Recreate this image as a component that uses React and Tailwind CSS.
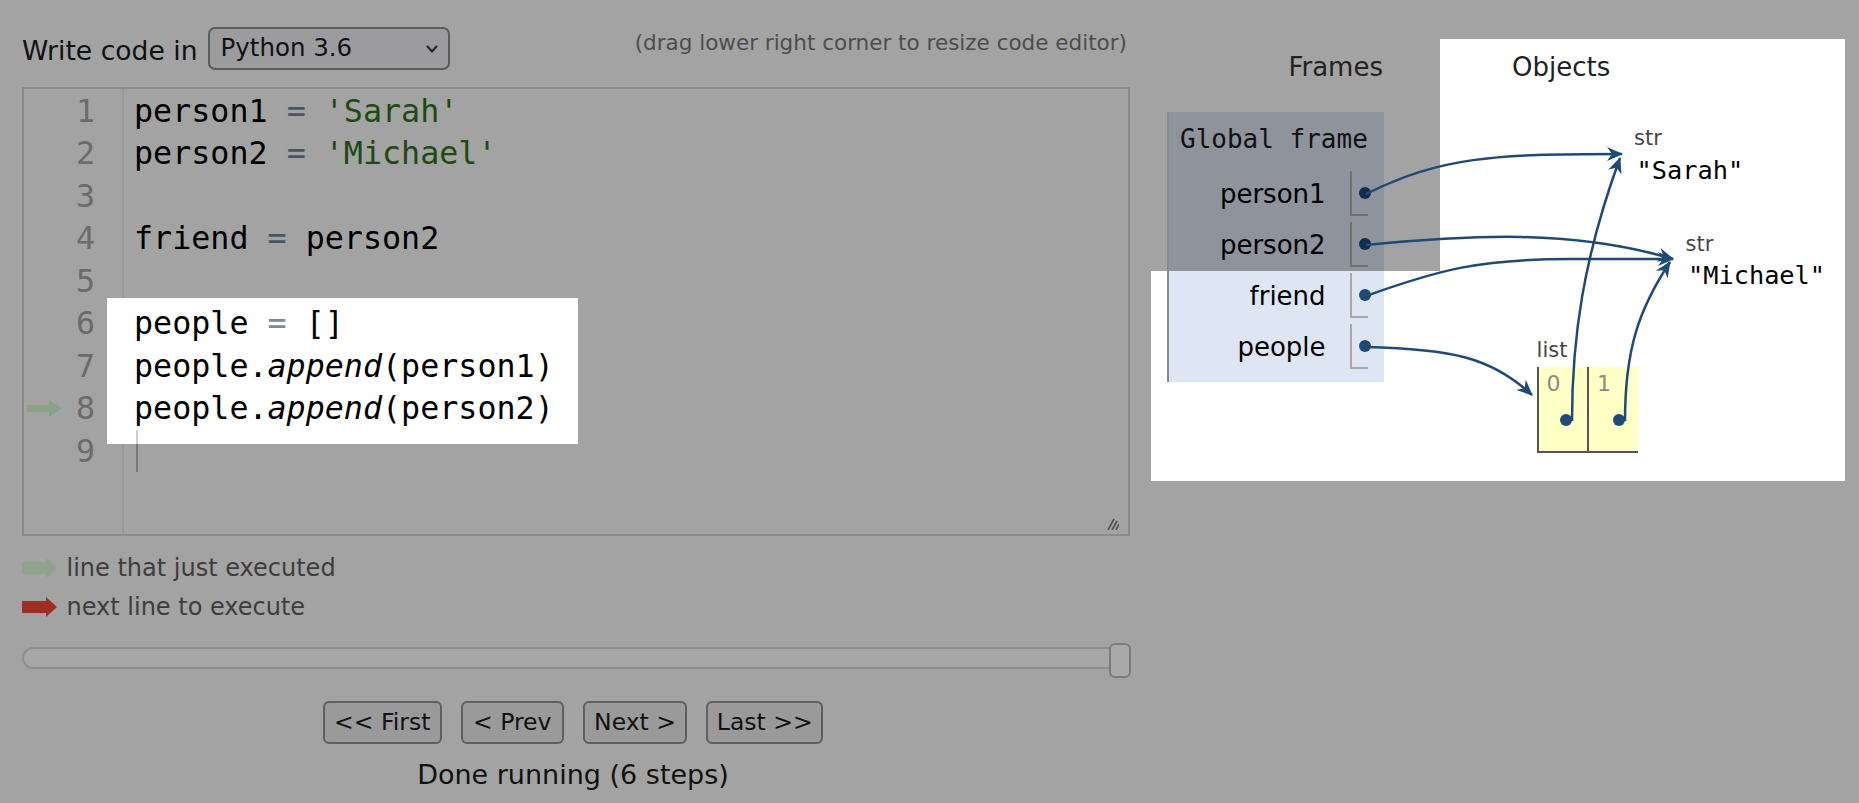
import React from 'react';

const SANS = "font-['DejaVu_Sans',Verdana,sans-serif]";
const MONO = "font-['DejaVu_Sans_Mono',monospace]";

const Arrow = ({ color, w = 35, h = 20, body = 24, thick = 12 }) => (
  <svg width={w} height={h} viewBox={`0 0 ${w} ${h}`} className="block shrink-0">
    <rect x="0" y={(h - thick) / 2} width={body} height={thick} fill={color} />
    <polygon points={`${body},0 ${w},${h / 2} ${body},${h}`} fill={color} />
  </svg>
);

const Eq = ({ light }) => (
  <span className={light ? 'text-[#7d8b9d]' : 'text-[#4a5562]'}>=</span>
);

const Str = ({ children }) => <span className="text-[#1c4a12]">{children}</span>;

const frameRows = [
  { name: 'person1', dim: true },
  { name: 'person2', dim: true },
  { name: 'friend', dim: false },
  { name: 'people', dim: false },
];

const NavButton = ({ label, width }) => (
  <button
    className={`h-[43px] rounded-[6px] border-2 border-[#5f5f62] bg-[#9a9a9b] text-[23.5px] text-[#111] ${width}`}
  >
    {label}
  </button>
);

export default function App() {
  const lineNums = [1, 2, 3, 4, 5, 6, 7, 8, 9];

  return (
    <div className={`w-[1859px] h-[803px] bg-[#a3a3a3] flex overflow-hidden leading-[normal] ${SANS}`}>
      {/* left column: editor + controls */}
      <div className="ml-[22px] w-[1108px] flex flex-col">
        <div className="flex items-center h-[43px] mt-[27px]">
          <span className="text-[26.6px] leading-[30px] text-[#111] mr-[10px] mt-[4px]">Write code in</span>
          <div className="w-[242px] h-[43px] border-2 border-[#5a5a5f] rounded-[7px] bg-[#9c9c9e] flex items-center pl-[11px] pr-[10px]">
            <span className="text-[24.5px] text-[#111] leading-none">Python 3.6</span>
            <svg width="12" height="8" viewBox="0 0 12 8" className="ml-auto">
              <polyline points="1,1 6,6.5 11,1" fill="none" stroke="#222" strokeWidth="2" />
            </svg>
          </div>
          <span className="ml-auto self-start mt-[3px] mr-[3px] text-[21.5px] text-[#4d4d4d]">
            (drag lower right corner to resize code editor)
          </span>
        </div>

        {/* code editor */}
        <div className={`relative mt-[17px] h-[449px] border-2 border-[#8c8c8c] flex ${MONO} text-[31.7px] leading-[42.5px]`}>
          <div className="w-[100px] border-r-2 border-[#999999] pt-[0.5px] pr-[27px] text-[#6b6b6b]">
            {lineNums.map((n) => (
              <div key={n} className="h-[42.5px] flex items-center">
                {n === 8 && (
                  <div className="pl-[3px]">
                    <Arrow color="#8ba186" w={35} h={17} body={22} thick={7} />
                  </div>
                )}
                <span className="ml-auto">{n}</span>
              </div>
            ))}
          </div>
          <div className="flex-1 pt-[0.5px] text-black whitespace-pre">
            <div className="pl-[10px] h-[42.5px]">person1 <Eq /> <Str>'Sarah'</Str></div>
            <div className="pl-[10px] h-[42.5px]">person2 <Eq /> <Str>'Michael'</Str></div>
            <div className="pl-[10px] h-[42.5px]"></div>
            <div className="pl-[10px] h-[42.5px]">friend <Eq /> person2</div>
            <div className="pl-[10px] h-[42.5px]"></div>
            <div className="bg-white w-[471px] -ml-[17.5px] -mt-[4px] pt-[4px] pb-[14.5px] -mb-[14.5px]">
              <div className="pl-[27.5px] h-[42.5px]">people <Eq light /> []</div>
              <div className="pl-[27.5px] h-[42.5px]">people.<span className="italic">append</span>(person1)</div>
              <div className="pl-[27.5px] h-[42.5px]">people.<span className="italic">append</span>(person2)</div>
            </div>
            <div className="pl-[11.5px] h-[42.5px]">
              <div className="w-[2px] h-[14.5px] bg-[#cfcfcf]" />
              <div className="w-[2px] h-[28px] bg-[#7a7a7a]" />
            </div>
          </div>
          <svg width="14" height="12" viewBox="0 0 14 12" className="absolute right-[9px] bottom-[4px]">
            <line x1="3" y1="12" x2="9" y2="1" stroke="#4f4f4f" strokeWidth="1.6" />
            <line x1="7" y1="12" x2="12" y2="3" stroke="#4f4f4f" strokeWidth="1.6" />
            <line x1="11" y1="12" x2="14" y2="6" stroke="#4f4f4f" strokeWidth="1.6" />
          </svg>
        </div>

        {/* legend */}
        <div className="mt-[18px] flex items-center h-[28px] text-[24px] text-[#3d3d3d]">
          <Arrow color="#8ea58b" />
          <span className="ml-[9.5px]">line that just executed</span>
        </div>
        <div className="mt-[11px] flex items-center h-[28px] text-[24px] text-[#3d3d3d]">
          <Arrow color="#9c2f22" />
          <span className="ml-[9.5px]">next line to execute</span>
        </div>

        {/* slider */}
        <div className="relative mt-[22px] h-[35px]">
          <div className="mt-[4px] h-[22px] w-[1109px] rounded-full border-2 border-[#8e8e8e] bg-[#a7a7a7]" />
          <div className="absolute left-[1087px] top-0 w-[22px] h-[35px] rounded-[6px] border-2 border-[#7b7b7b] bg-[#a9a9a9]" />
        </div>

        {/* nav buttons */}
        <div className="mt-[22.7px] flex justify-center gap-[19px] pr-[6px]">
          <NavButton label="<< First" width="w-[119px]" />
          <NavButton label="< Prev" width="w-[103px]" />
          <NavButton label="Next >" width="w-[104.5px]" />
          <NavButton label="Last >>" width="w-[117px]" />
        </div>
        <div className="mt-[15px] text-center text-[27px] text-[#111] pr-[6px]">Done running (6 steps)</div>
      </div>

      {/* right: frames and objects visualization */}
      <div className="relative ml-[21px] mt-[39px] w-[694px] h-[442px] bg-white">
        <div className="absolute left-0 top-0 w-[289px] h-[232px] bg-[#a3a3a3]" />
        <div className="absolute left-[361px] top-[13px] text-[26px] leading-[30px] text-[#222]">Objects</div>

        <div className="relative w-[232px] flex flex-col">
          <div className="mt-[13px] text-right text-[26px] leading-[30px] text-[#222]">Frames</div>
          <div className="mt-[30px] ml-[15.6px] w-[217px] border-l-2 border-[#8a8a8a] pb-[13px] bg-[linear-gradient(to_bottom,#8e939c_158.7px,#dfe6f3_158.7px)]">
            <div className={`pt-[12px] pl-[11.4px] text-[26px] leading-[30px] text-[#111] ${MONO}`}>Global frame</div>
            <div className="mt-[17.4px] flex flex-col gap-[6px]">
              {frameRows.map((r) => (
                <div key={r.name} className="flex items-center h-[45px]">
                  <span className="w-[157px] text-right text-[26px] leading-[30px] text-black">{r.name}</span>
                  <div
                    className={`relative ml-[24.3px] w-[18px] h-[45px] border-l-2 border-b-2 ${
                      r.dim ? 'border-[#707070]' : 'border-[#a9a9a9]'
                    }`}
                  >
                    <div
                      className={`absolute left-[7.6px] top-[15.5px] w-[12px] h-[12px] rounded-full ${
                        r.dim ? 'bg-[#0f2e4d]' : 'bg-[#1d4a77]'
                      }`}
                    />
                  </div>
                </div>
              ))}
            </div>
          </div>
        </div>

        {/* heap objects */}
        <div className="absolute left-[483px] top-[87px]">
          <div className="text-[21px] text-[#444]">str</div>
          <div className={`mt-[6px] ml-[2.6px] text-[25.3px] text-black ${MONO}`}>"Sarah"</div>
        </div>
        <div className="absolute left-[534.6px] top-[193.2px]">
          <div className="text-[21px] text-[#444]">str</div>
          <div className={`mt-[5px] ml-[2.4px] text-[25.3px] text-black ${MONO}`}>"Michael"</div>
        </div>
        <div className="absolute left-[385.6px] top-[298.8px]">
          <div className="text-[21px] text-[#444]">list</div>
          <div className="mt-[5px] flex">
            <div className="relative w-[50.5px] h-[86.7px] border-l-2 border-b-2 border-[#555] bg-[#ffffc6]">
              <div className="pl-[8px] pt-[4.7px] text-[22px] text-[#8a8a8a]">0</div>
              <div className="absolute left-[21.4px] top-[47.7px] w-[12px] h-[12px] rounded-full bg-[#1d4a77]" />
            </div>
            <div className="relative w-[51px] h-[86.7px] border-l-2 border-b-2 border-[#555] bg-[#ffffc6]">
              <div className="pl-[8px] pt-[4.7px] text-[22px] text-[#8a8a8a]">1</div>
              <div className="absolute left-[23.5px] top-[47.7px] w-[12px] h-[12px] rounded-full bg-[#1d4a77]" />
            </div>
          </div>
        </div>

        {/* pointer arrows */}
        <svg className="absolute inset-0 pointer-events-none" width="694" height="442" viewBox="0 0 694 442">
          <defs>
            <marker id="head" viewBox="0 0 16 14" refX="15" refY="7" markerWidth="16" markerHeight="14" markerUnits="userSpaceOnUse" orient="auto">
              <path d="M0,0 L16,7 L0,14 L5,7 z" fill="#1f4a78" />
            </marker>
          </defs>
          <g fill="none" stroke="#1f4a78" strokeWidth="2.5" markerEnd="url(#head)">
            <path d="M215,155 C290,118 340,115 471,115" />
            <path d="M215,206 C320,196 420,190 522,220" />
            <path d="M215,257 C290,230 330,220 420,220 L522,220" />
            <path d="M215,308 C300,310 340,318 381,356" />
            <path d="M421,382 C421,300 432,220 469,119" />
            <path d="M474,382 C474,310 488,270 519,223" />
          </g>
        </svg>
      </div>
    </div>
  );
}
